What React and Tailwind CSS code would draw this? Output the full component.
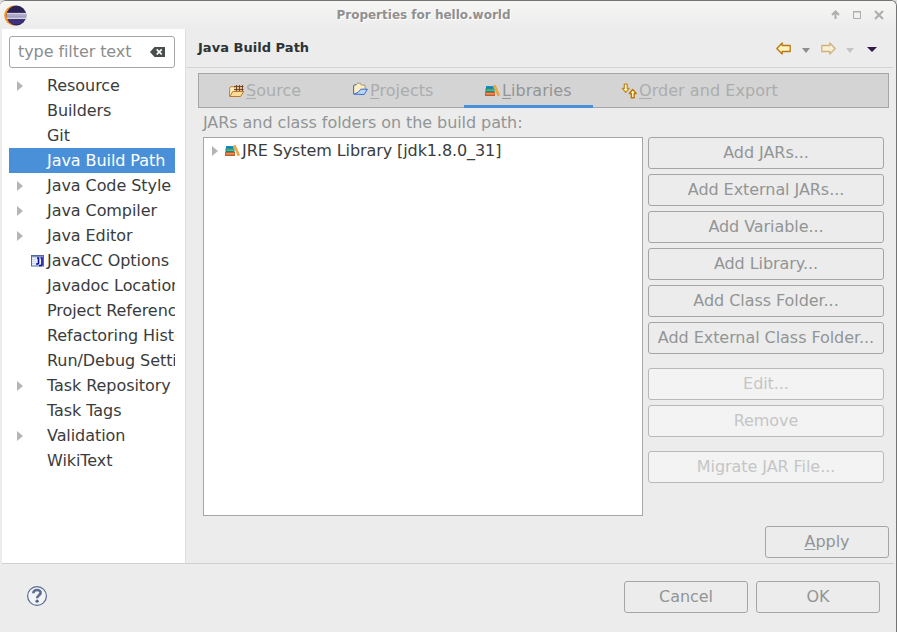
import React from "react";

const tree = [
  { label: "Resource", arrow: true },
  { label: "Builders" },
  { label: "Git" },
  { label: "Java Build Path", selected: true },
  { label: "Java Code Style", arrow: true },
  { label: "Java Compiler", arrow: true },
  { label: "Java Editor", arrow: true },
  { label: "JavaCC Options", icon: true },
  { label: "Javadoc Location" },
  { label: "Project References" },
  { label: "Refactoring History" },
  { label: "Run/Debug Settings" },
  { label: "Task Repository", arrow: true },
  { label: "Task Tags" },
  { label: "Validation", arrow: true },
  { label: "WikiText" },
];

function EclipseLogo() {
  return (
    <svg className="ml-[4px] mt-[3px] shrink-0" width="23" height="23" viewBox="0 0 23 23">
      <circle cx="10.2" cy="11.5" r="10" fill="#f7941e" />
      <circle cx="12.4" cy="11.5" r="9.9" fill="#2c2255" />
      <path d="M3 8.8h19.2v6.4H3z" fill="#8c86b4" />
      <path d="M2.8 9h19.4v1.4H2.8zM2.8 13.6h19.4V15H2.8z" fill="#d3d1e2" />
      <path d="M2.6 11.2h19.8v1.3H2.6z" fill="#bab6d2" />
      <path d="M4.5 16.2h16c-3 4.6-12.5 6.4-16 0z" fill="#413083" />
    </svg>
  );
}

function Expander() {
  return (
    <svg className="shrink-0" width="6" height="10" viewBox="0 0 6 10">
      <path d="M0 0L6 5L0 10z" fill="#b4b6b6" />
    </svg>
  );
}

function JavaCCIcon() {
  return (
    <svg className="shrink-0" width="13" height="12" viewBox="0 0 13 12">
      <rect x=".5" y=".5" width="12" height="10.5" fill="#e9f0f8" stroke="#536aa0" />
      <path d="M1 1h11v1.3H1z" fill="#8294bd" />
      <path d="M1 4.5h4M1 6.5h4M1 8.5h3" stroke="#c3cfe2" strokeWidth=".8" />
      <path d="M6 3h1.5v5.2L6.8 9H5M9.5 3H11v6.6l-.9.9H8" fill="none" stroke="#0b0b9c" strokeWidth="1.6" />
    </svg>
  );
}

function SourceIcon() {
  return (
    <svg className="shrink-0" width="16" height="14" viewBox="0 0 16 14">
      <path d="M.6 12.2V4.5l1-1.8h3.2l1 1.3H12v4" fill="#fdeebb" stroke="#c08635" />
      <path d="M5.5 1.5h8.5V7H5.5z" fill="#e3bb90" />
      <path d="M5 2.5h9.5M5 5.5h9.5M7.5 1v6M10.5 1v6M13.5 1v6" stroke="#694022" strokeWidth=".9" />
      <path d="M.8 12.5L3.8 7.5h11L11.6 12.5z" fill="#fcdd97" stroke="#b97a2c" />
    </svg>
  );
}

function ProjectsIcon() {
  return (
    <svg className="shrink-0 -translate-y-[2px]" width="16" height="14" viewBox="0 0 16 14">
      <path d="M1.6 11.8V4l1-1.2h1.6L5.3 1.2h3l1 1.9h3.8v4" fill="#fbeec2" stroke="#a39a7b" />
      <path d="M4.2 2.8H2.6L1.6 4v7.8" fill="none" stroke="#4b72b5" />
      <path d="M1.8 12.2L6.2 10.3L8.8 7.2h6.6L12.2 12.5z" fill="#b8d6fb" stroke="#3f6bc7" />
    </svg>
  );
}

function BooksIcon() {
  return (
    <svg className="shrink-0" width="15" height="11" viewBox="0 0 15 11">
      <path d="M1 1h7.5v2.5H1z" fill="#1590c8" />
      <path d="M1 2.7h7.5v.8H1z" fill="#155e78" />
      <path d="M.5 3.5h9V7h-9z" fill="#188a68" />
      <path d="M1.5 4.5h7.5v1.2H1.5z" fill="#72c2a3" />
      <path d="M0 7h10v4H0z" fill="#c25e2e" />
      <path d="M.8 8h8.6v1.4H.8z" fill="#e09566" />
      <path d="M8.3.6L10.5 0L15 10.2l-2.3.8z" fill="#e6921e" />
      <path d="M9.4.6l4.4 9.8" stroke="#fbc25a" strokeWidth=".8" />
    </svg>
  );
}

function OrderIcon() {
  return (
    <svg className="shrink-0" width="16" height="16" viewBox="0 0 16 16">
      <path d="M3.3 1.2h2.9v4.2h1.9L4.7 9.4L1.3 5.4h2z" fill="#fff9dc" stroke="#c58a20" strokeWidth="1.3" strokeLinejoin="round" />
      <path d="M10.3 14.8h2.9v-4.3h2L11.7 6.4L8.3 10.5h2z" fill="#fff3c0" stroke="#b9770c" strokeWidth="1.4" strokeLinejoin="round" />
    </svg>
  );
}

function NavArrow({ forward }) {
  return (
    <svg className={forward ? "shrink-0 rotate-180 opacity-50" : "shrink-0"} width="15" height="13" viewBox="0 0 15 13">
      <path d="M.8 6.5L6.2 1v2.5h8v6h-8V12z" fill="#fff2bd" stroke="#b87812" strokeWidth="1.3" strokeLinejoin="round" />
    </svg>
  );
}

function DropArrow({ className, wide }) {
  return (
    <svg className={className} width={wide ? 10 : 8} height="5" viewBox="0 0 10 5" preserveAspectRatio="none">
      <path d="M0 0h10L5 5z" fill="currentColor" />
    </svg>
  );
}

function Button({ children, className = "", dim }) {
  return (
    <button
      className={`h-8 shrink-0 rounded-[3px] border text-center tracking-[-0.06px] whitespace-nowrap ${
        dim ? "border-[#b7b9b8] bg-[#f3f3f3] text-[#c4c6c5]" : "border-[#a4a6a5] bg-[#ececec] text-[#929595]"
      } ${className}`}
    >
      <span className="block h-[30px] leading-[30px]">{children}</span>
    </button>
  );
}

function Mnemonic({ text }) {
  return (
    <span>
      <span className="underline decoration-1 underline-offset-[2px]">{text[0]}</span>
      {text.slice(1)}
    </span>
  );
}

export default function App() {
  return (
    <div className="h-[632px] w-[897px] bg-[#dcdcdc] font-['DejaVu_Sans',sans-serif] text-[16px]">
      <div className="flex h-full flex-col overflow-hidden rounded-t-[6px] border-t border-r border-[#747474] bg-[#ececec]">
        <header className="flex h-7 shrink-0 bg-linear-to-b from-[#f6f6f5] to-[#ececec]">
          <EclipseLogo />
          <div className="mr-[11px] flex-1 pt-[6px] text-center text-[12px] leading-[17px] font-bold text-[#909090] [text-shadow:1px_1px_0_#fff]">
            Properties for hello.world
          </div>
          <svg className="mt-[8px] mr-[12px] shrink-0" width="53" height="12" viewBox="0 0 53 12" fill="none" stroke="#adadad">
            <path d="M4.5 10V3.5M1 6l3.5-3.5L8 6" strokeWidth="2" />
            <path d="M22.5 2.5h7v7h-7zM22 3h8" />
            <path d="M44 2l8 8M52 2l-8 8" strokeWidth="2" />
          </svg>
        </header>

        <div className="flex h-[534px] shrink-0">
          <aside className="ml-[2px] w-[184px] shrink-0 border-r border-[#dedede] bg-white pt-[7px] pl-[7px]">
            <div className="flex h-8 w-[166px] items-center rounded-[3px] border border-[#a6a6a6] pb-px pl-2 text-[#8b8e8e]">
              <span className="flex-1 tracking-[-0.08px] whitespace-nowrap">type filter text</span>
              <svg className="mr-[9px]" width="15" height="10" viewBox="0 0 15 10">
                <path d="M4.5 0H15v10H4.5L0 5z" fill="#4a4d4d" />
                <path d="M6.7 2.3l5 5.2M11.7 2.3l-5 5.2" stroke="#fff" strokeWidth="1.8" />
              </svg>
            </div>
            <ul className="mt-[5px] w-[166px] overflow-hidden tracking-[-0.07px]">
              {tree.map((item) => (
                <li
                  key={item.label}
                  className={`flex h-[25px] items-center whitespace-nowrap ${
                    item.selected ? "bg-[#4a90d9] text-white" : "text-[#393c3d]"
                  }`}
                >
                  <span className="w-[22px] shrink-0 pl-[8px]">{item.arrow && <Expander />}</span>
                  <span className="w-[16px] shrink-0">{item.icon && <JavaCCIcon />}</span>
                  <span>{item.label}</span>
                </li>
              ))}
            </ul>
          </aside>

          <main className="flex min-w-0 flex-1 flex-col">
            <div className="mr-[2px] flex h-[39px] shrink-0 items-center border-b border-[#d4d4d4] pl-[12px]">
              <h1 className="flex-1 text-[13px] leading-[16px] font-bold tracking-[0.03px] text-[#2c3436]">Java Build Path</h1>
              <div className="mr-[17px] flex items-center pt-px">
                <NavArrow />
                <DropArrow className="mt-[3px] ml-[11px] text-[#8a8e8f]" />
                <span className="ml-[11px] flex"><NavArrow forward /></span>
                <DropArrow className="mt-[3px] ml-[10px] text-[#c3c5c5]" />
                <DropArrow wide className="mt-[1px] ml-[13px] text-[#35194e]" />
              </div>
            </div>

            <nav className="mt-[5px] ml-[12px] flex h-[35px] w-[691px] shrink-0 border border-[#a5a7a7] bg-[#d4d4d4] tracking-[0.05px] text-[#abadad]">
              <div className="flex w-[125px] items-center pl-[30px]">
                <SourceIcon />
                <span className="ml-px"><Mnemonic text="Source" /></span>
              </div>
              <div className="flex w-[140px] items-center pl-[28px]">
                <ProjectsIcon />
                <span className="ml-[2px]"><Mnemonic text="Projects" /></span>
              </div>
              <div className="mb-[-1px] flex w-[129px] items-center border-b-[3px] border-[#4a90d9] pt-[2px] pl-[21px] text-[#929595]">
                <BooksIcon />
                <span className="ml-[2px]"><Mnemonic text="Libraries" /></span>
              </div>
              <div className="flex items-center pl-[28px]">
                <OrderIcon />
                <span className="ml-[2px]"><Mnemonic text="Order and Export" /></span>
              </div>
            </nav>

            <p className="mt-[2px] ml-[17px] h-[27px] leading-[25px] tracking-[-0.07px] text-[#929595]">JARs and class folders on the build path:</p>

            <div className="ml-[17px] flex">
              <section className="h-[379px] w-[440px] shrink-0 border border-[#a5a7a7] bg-white">
                <div className="flex h-[25px] items-center pl-[8px] text-[#393c3d]">
                  <Expander />
                  <span className="ml-[7px]"><BooksIcon /></span>
                  <span className="ml-[2px] tracking-[-0.09px] whitespace-nowrap">JRE System Library [jdk1.8.0_31]</span>
                </div>
              </section>
              <div className="ml-[5px] flex w-[236px] flex-col gap-[5px]">
                <Button>Add JARs...</Button>
                <Button>Add External JARs...</Button>
                <Button>Add Variable...</Button>
                <Button>Add Library...</Button>
                <Button>Add Class Folder...</Button>
                <Button>Add External Class Folder...</Button>
                <Button dim className="mt-[9px]">Edit...</Button>
                <Button dim>Remove</Button>
                <Button dim className="mt-[9px]">Migrate JAR File...</Button>
              </div>
            </div>
            <Button className="mt-[10px] mr-[7px] w-[124px] self-end"><Mnemonic text="Apply" /></Button>
          </main>
        </div>

        <footer className="mr-[2px] ml-[2px] flex flex-1 items-start border-t border-[#d0d0d0] pt-[17px] pr-[14px] pl-[24px]">
          <svg className="mt-[4px]" width="22" height="22" viewBox="0 0 22 22" fill="none" stroke="#5b6d91">
            <circle cx="11" cy="11" r="9.4" fill="#f3f4f6" strokeWidth="1.2" />
            <path d="M7.3 8.2C7.3 3.8 15 4 14.6 8c-.2 2.2-3.5 2.4-3.5 5.2" strokeWidth="2.6" />
            <circle cx="11.1" cy="16.2" r="1.6" fill="#53658a" stroke="none" />
          </svg>
          <div className="ml-auto flex gap-2">
            <Button className="w-[124px]">Cancel</Button>
            <Button className="w-[124px]">OK</Button>
          </div>
        </footer>
      </div>
    </div>
  );
}
